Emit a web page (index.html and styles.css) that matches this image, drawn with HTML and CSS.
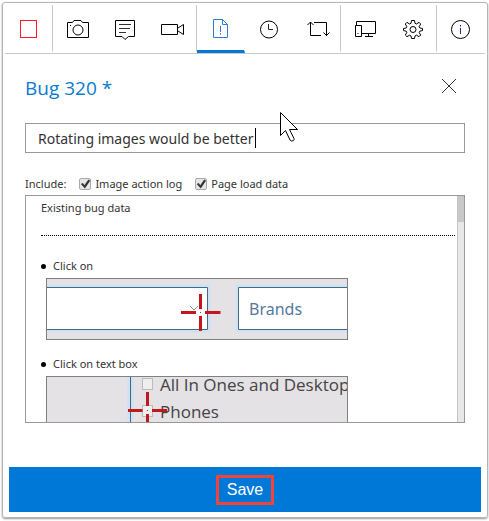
FILE: index.html
```html
<!DOCTYPE html>
<html lang="en">
<head>
<meta charset="utf-8">
<title>Bug 320</title>
<meta name="viewport" content="width=device-width, initial-scale=1">
<link rel="stylesheet" href="styles.css">
</head>
<body>
<main class="panel">
  <nav class="toolbar" aria-label="Session tools">
    <button class="tool tool-end" type="button" aria-label="Stop session">
      <svg class="icon" viewBox="0 0 24 24"><rect x="3.500" y="3.500" width="16" height="17" stroke="#ff1a2a"/></svg>
    </button>
    <button class="tool" type="button" aria-label="Capture screenshot">
      <svg class="icon" viewBox="0 0 24 24"><path d="M2.500 5.500H7.500L9 3.500H16L17.500 5.500H23.500V20.500H2.500Z"/><circle cx="13" cy="13" r="5"/><path d="M5 8.500H6"/></svg>
    </button>
    <button class="tool" type="button" aria-label="Add note">
      <svg class="icon" viewBox="0 0 24 24"><path d="M2.500 3.500H21.500V19.500H15.500L12 22.500L9 19.500H2.500Z"/><path d="M6 7.500H18M6 11.500H17M6 15.500H13" stroke="#333"/></svg>
    </button>
    <button class="tool tool-end" type="button" aria-label="Record screen">
      <svg class="icon" viewBox="0 0 24 24"><path d="M.5 7.500H16.500V17.500H.5ZM17 11L22.500 7.500V17.500L17 14"/></svg>
    </button>
    <button class="tool tool-active" type="button" aria-label="Create bug" aria-pressed="true">
      <svg class="icon" viewBox="0 0 24 24"><path d="M4.500 2.500H13.500L18.500 7.500V20.500H4.500ZM13.500 2.500V7.500H18.500M11.500 9V15M11.500 16V17.500"/></svg>
    </button>
    <button class="tool" type="button" aria-label="Session timeline">
      <svg class="icon" viewBox="0 0 24 24"><circle cx="12" cy="12.500" r="8.500"/><path d="M11.500 7V12.500H16" stroke="#222"/></svg>
    </button>
    <button class="tool tool-end" type="button" aria-label="Record image action log">
      <svg class="icon" viewBox="0 0 24 24"><path d="M5.500 5V18.500H16M2.500 8L5.500 5L8.500 8M9 5.500H21.500V19M18.500 15.500L21.500 18.500L24.500 15.500"/></svg>
    </button>
    <button class="tool" type="button" aria-label="Device simulation">
      <svg class="icon" viewBox="0 0 24 24"><path d="M3.500 8V4.500H22.500V16.500H9M12 19.500H20M15.500 17V19"/><path d="M2.500 8.500H8.500V19.500H2.500ZM4.500 16.500H5.500"/></svg>
    </button>
    <button class="tool tool-end" type="button" aria-label="Settings">
      <svg class="icon" viewBox="0 0 24 24"><path d="M10.500 3.500H13.500L14 6.300L15.600 7L18 5.300L19.700 7L18.200 9.500L18.800 11L21.500 11.500V13.500L18.800 14.200L18.200 15.600L19.700 18L18 19.700L15.600 18.200L14 18.900L13.500 21.500H10.500L10 18.900L8.400 18.200L6 19.700L4.300 18L5.800 15.600L5.200 14.200L2.500 13.500V11.500L5.200 11L5.800 9.500L4.300 7L6 5.300L8.400 7L10 6.300Z"/><circle cx="12" cy="12.500" r="3"/></svg>
    </button>
    <button class="tool" type="button" aria-label="Information">
      <svg class="icon" viewBox="0 0 24 24"><circle cx="11.500" cy="12.500" r="9"/><path d="M11.500 8V9.500M11.500 11V17" stroke="#22227a"/></svg>
    </button>
  </nav>

  <form class="bug">
    <header class="bug-head">
      <h1 class="bug-title">Bug 320 *</h1>
      <button class="close" type="button" aria-label="Close">
        <svg class="close-icon" viewBox="0 0 16 16"><path d="M1 1L15 15M15 1L1 15"/></svg>
      </button>
    </header>

    <div class="field">
      <input class="title-input" type="text" aria-label="Bug title" value="Rotating images would be better">
      <span class="caret"></span>
      <svg class="pointer" viewBox="0 0 20 32"><path d="M1.500 1.500V24.500L6.500 19.500L11 29Q12.500 31 14.500 29.500Q15.500 28.500 15 27.500L10.500 18.500H18.500Z"/></svg>
    </div>

    <div class="include">
      <span>Include:</span>
      <label class="option"><input class="check" type="checkbox" checked>Image action log</label>
      <label class="option"><input class="check" type="checkbox" checked>Page load data</label>
    </div>

    <section class="data">
      <div class="data-body">
        <h2 class="data-title">Existing bug data</h2>
        <ul class="steps">
          <li class="step">
            <p class="step-name">Click on</p>
            <svg class="shot" viewBox="0 0 300 60" width="300" height="60">
              <path class="halo" d="M0 8.500H160.500V50.500H0M300 8.500H191.500V50.500H300"/>
              <path class="frame" d="M-1 8.500H160.500V50.500H-1M301 8.500H191.500V50.500H301"/>
              <path class="chevron" d="M143 27L147 31L151 27"/>
              <text class="shot-brand" x="202" y="36">Brands</text>
              <circle cx="153.500" cy="33.500" r="5" fill="#fff"/>
              <path class="cross" d="M134 33.500H149M158 33.500H173.500M153.500 15V30M153.500 37V52"/>
              <path d="M153 33.500H154" stroke="#a33"/>
            </svg>
          </li>
          <li class="step">
            <p class="step-name">Click on text box</p>
            <svg class="shot" viewBox="0 0 300 60" width="300" height="60">
              <path class="halo" d="M83.500 0V60"/>
              <path class="frame" d="M83.500 0V60"/>
              <rect class="box" x="95.500" y="1.500" width="10" height="11"/>
              <rect class="box" x="95.500" y="28.500" width="10" height="11"/>
              <text class="shot-text" x="113" y="14">All In Ones and Desktop</text>
              <text class="shot-text" x="113" y="41">Phones</text>
              <path class="cross" d="M81 33.500H95.500M105 33.500H120M100.500 15V29M100.500 37V52"/>
              <path d="M100 33.500H101" stroke="#a33"/>
            </svg>
          </li>
        </ul>
      </div>
      <div class="scroll"><div class="scroll-thumb"></div></div>
    </section>

    <button class="save" type="submit"><span class="save-label">Save</span></button>
  </form>
</main>
</body>
</html>
```
FILE: styles.css
```css
* {
  box-sizing: border-box;
}

body {
  margin: 0;
  padding: 2px 1px 3px 2px;
  background: #fff;
  color: #333;
  font: 11px/16px "Noto Sans", "Open Sans", sans-serif;
}

button {
  margin: 0;
  padding: 0;
  border: 0;
  background: none;
  font: inherit;
}

.panel {
  padding: 2px;
  border: 1px solid #b4b4b4;
  border-radius: 3px;
  box-shadow: 0 1px 2px #999;
}

.toolbar {
  display: flex;
  border-bottom: 1px solid #c8c8c8;
}

.tool {
  display: flex;
  flex: 1;
  align-items: center;
  justify-content: center;
  height: 48px;
  border-right: 1px solid transparent;
  border-bottom: 3px solid transparent;
  padding-top: 3px;
  padding-left: 1px;
  color: #000;
}

.tool-end {
  border-right-color: #c8c8c8;
}

.tool-active {
  border-bottom-color: #0078d7;
  color: #2b7cd8;
}

.icon {
  width: 24px;
  height: 24px;
  overflow: visible;
  fill: none;
  stroke: currentColor;
}

.bug {
  display: flex;
  flex-direction: column;
  padding: 20px 4px 3px;
}

.bug-head,
.field,
.include,
.data {
  margin: 0 16px;
}

.bug-head {
  display: flex;
  align-items: center;
  justify-content: space-between;
  padding-right: 8px;
}

.bug-title {
  margin: 0;
  color: #0a7bd0;
  font-family: "Open Sans", "Noto Sans", sans-serif;
  font-size: 19px;
  font-weight: 400;
  line-height: 28px;
}

.close {
  display: flex;
  margin-bottom: 4px;
}

.close-icon {
  width: 16px;
  height: 16px;
  fill: none;
  stroke: #333;
}

.field {
  position: relative;
  margin-top: 21px;
}

.title-input {
  display: block;
  width: 100%;
  height: 30px;
  padding: 0 12px;
  border: 1px solid #999;
  border-radius: 0;
  outline: 0;
  background: #fff;
  color: #333;
  font: 14px/28px "Noto Sans", "Open Sans", sans-serif;
}

.caret {
  position: absolute;
  top: 5px;
  left: 230px;
  width: 1px;
  height: 20px;
  background: #000;
}

.pointer {
  position: absolute;
  top: -12px;
  left: 254px;
  width: 20px;
  height: 32px;
  fill: #fff;
  stroke: #000;
}

.include {
  display: flex;
  align-items: center;
  gap: 13px;
  margin-top: 23px;
}

.option {
  display: flex;
  align-items: center;
  gap: 4px;
}

.check {
  display: grid;
  place-items: center;
  width: 12px;
  height: 12px;
  margin: 0;
  border: 1px solid #aaa;
  border-radius: 2px;
  background: #e6e6e6;
  appearance: none;
}

.check:checked::before {
  content: "";
  width: 10px;
  height: 10px;
  background: #333;
  clip-path: polygon(5% 50%, 25% 40%, 40% 62%, 80% 5%, 98% 18%, 45% 95%);
}

.data {
  display: flex;
  height: 228px;
  margin-top: 3px;
  border: 1px solid #999;
}

.data-body {
  flex: 1;
  min-width: 0;
  padding: 4px 2px 0 15px;
  overflow: hidden;
}

.data-title {
  margin: 0 0 22px;
  padding-bottom: 19px;
  border-bottom: 1px dotted #000;
  font-size: 11px;
  font-weight: 400;
}

.steps {
  margin: 0;
  padding: 0;
  list-style: none;
}

.step {
  margin-bottom: 16px;
}

.step-name {
  display: flex;
  align-items: center;
  gap: 7px;
  margin: 0 0 4px;
}

.step-name::before {
  content: "";
  width: 5px;
  height: 5px;
  border-radius: 50%;
  background: #000;
}

.shot {
  display: block;
  box-sizing: content-box;
  margin-left: 5px;
  border: 1px solid #808080;
  background: #e4e2e5;
  overflow: hidden;
  fill: none;
}

.halo {
  stroke: #cfe2f2;
  stroke-width: 6px;
}

.frame {
  fill: #fff;
  stroke: #44697f;
}

.chevron {
  stroke: #7b98a8;
}

.shot-brand {
  fill: #54799f;
  font-size: 16px;
}

.shot-text {
  fill: #444;
  font-family: "Open Sans", "Noto Sans", sans-serif;
  font-size: 17px;
}

.box {
  fill: #eee;
  stroke: #bbb;
}

.cross {
  stroke: #c4161c;
  stroke-width: 3px;
}

.scroll {
  width: 7px;
  border-left: 1px solid #c4c4c4;
  background: #e8e8e8;
}

.scroll-thumb {
  height: 26px;
  background: #c8c8c8;
}

.save {
  display: flex;
  align-items: center;
  justify-content: center;
  height: 45px;
  margin-top: 44px;
  background: #0078d7;
  color: #fff;
}

.save-label {
  padding: 0 8px;
  border: 3px solid #f04438;
  font: 16px/24px "Liberation Sans", Arial, sans-serif;
}
```
